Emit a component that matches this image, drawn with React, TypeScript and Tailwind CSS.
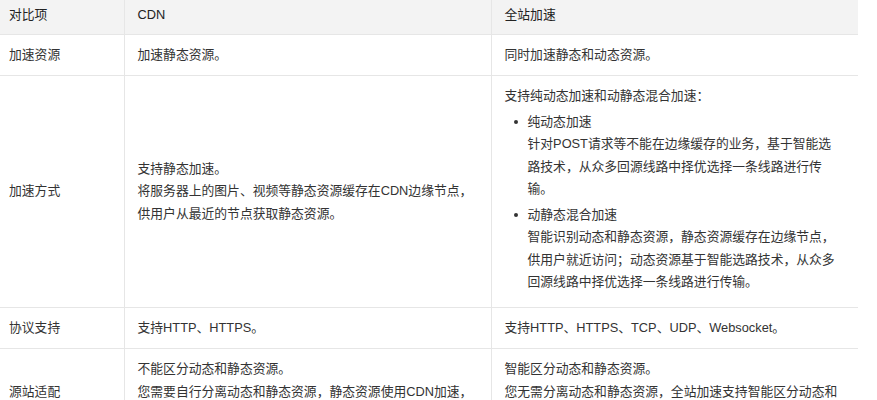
import React from 'react';

const font = "font-['Liberation_Sans','Noto_Sans_CJK_SC',sans-serif]";

const Lines = ({ lines }: { lines: string[] }) => (
  <>
    {lines.map((l, i) => (
      <div key={i} className="whitespace-nowrap">
        {l}
      </div>
    ))}
  </>
);

const Bullet = ({ title, lines }: { title: string; lines: string[] }) => (
  <li className="flex mt-[3px]">
    <div className="w-[23px] h-[22.5px] flex items-center shrink-0">
      <span className="ml-[9px] w-[4px] h-[4px] rounded-full bg-[#333]" />
    </div>
    <div>
      <div>{title}</div>
      <Lines lines={lines} />
    </div>
  </li>
);

const cell = 'border-b border-[#e6e6e6] px-[13px] py-[9px] align-middle text-left';
const cellL = cell + ' border-l';

export default function App() {
  return (
    <div className={`bg-white w-[877px] h-[400px] overflow-hidden text-[#333] text-[12.8px] leading-[22.5px] ${font}`}>
      <table className="border-collapse table-fixed w-[858px]">
        <colgroup>
          <col className="w-[124px]" />
          <col className="w-[367px]" />
          <col className="w-[367px]" />
        </colgroup>
        <thead>
          <tr className="bg-[#f3f3f3]">
            <th className="border-b border-[#e6e6e6] pl-[9px] pr-[13px] pt-[4px] pb-[7px] font-normal text-left text-[#222]">对比项</th>
            <th className="border-b border-l border-[#e6e6e6] px-[13px] pt-[4px] pb-[7px] font-normal text-left text-[#222]">CDN</th>
            <th className="border-b border-l border-[#e6e6e6] px-[13px] pt-[4px] pb-[7px] font-normal text-left text-[#222]">全站加速</th>
          </tr>
        </thead>
        <tbody>
          <tr>
            <td className={cell + ' pl-[9px]'}>加速资源</td>
            <td className={cellL}>加速静态资源。</td>
            <td className={cellL}>同时加速静态和动态资源。</td>
          </tr>
          <tr>
            <td className={cell + ' pl-[9px]'}>加速方式</td>
            <td className={cellL}>
              <Lines
                lines={[
                  '支持静态加速。',
                  '将服务器上的图片、视频等静态资源缓存在CDN边缘节点，',
                  '供用户从最近的节点获取静态资源。',
                ]}
              />
            </td>
            <td className={cellL}>
              <div>支持纯动态加速和动静态混合加速：</div>
              <ul className="mb-[4px]">
                <Bullet
                  title="纯动态加速"
                  lines={[
                    '针对POST请求等不能在边缘缓存的业务，基于智能选',
                    '路技术，从众多回源线路中择优选择一条线路进行传',
                    '输。',
                  ]}
                />
                <Bullet
                  title="动静态混合加速"
                  lines={[
                    '智能识别动态和静态资源，静态资源缓存在边缘节点，',
                    '供用户就近访问；动态资源基于智能选路技术，从众多',
                    '回源线路中择优选择一条线路进行传输。',
                  ]}
                />
              </ul>
            </td>
          </tr>
          <tr>
            <td className={cell + ' pl-[9px]'}>协议支持</td>
            <td className={cellL}>支持HTTP、HTTPS。</td>
            <td className={cellL}>支持HTTP、HTTPS、TCP、UDP、Websocket。</td>
          </tr>
          <tr>
            <td className={cell + ' pl-[9px]'}>源站适配</td>
            <td className={cellL}>
              <Lines
                lines={[
                  '不能区分动态和静态资源。',
                  '您需要自行分离动态和静态资源，静态资源使用CDN加速，',
                  '动态资源直接回源站。',
                ]}
              />
            </td>
            <td className={cellL}>
              <Lines
                lines={[
                  '智能区分动态和静态资源。',
                  '您无需分离动态和静态资源，全站加速支持智能区分动态和',
                  '静态资源。',
                ]}
              />
            </td>
          </tr>
        </tbody>
      </table>
    </div>
  );
}
